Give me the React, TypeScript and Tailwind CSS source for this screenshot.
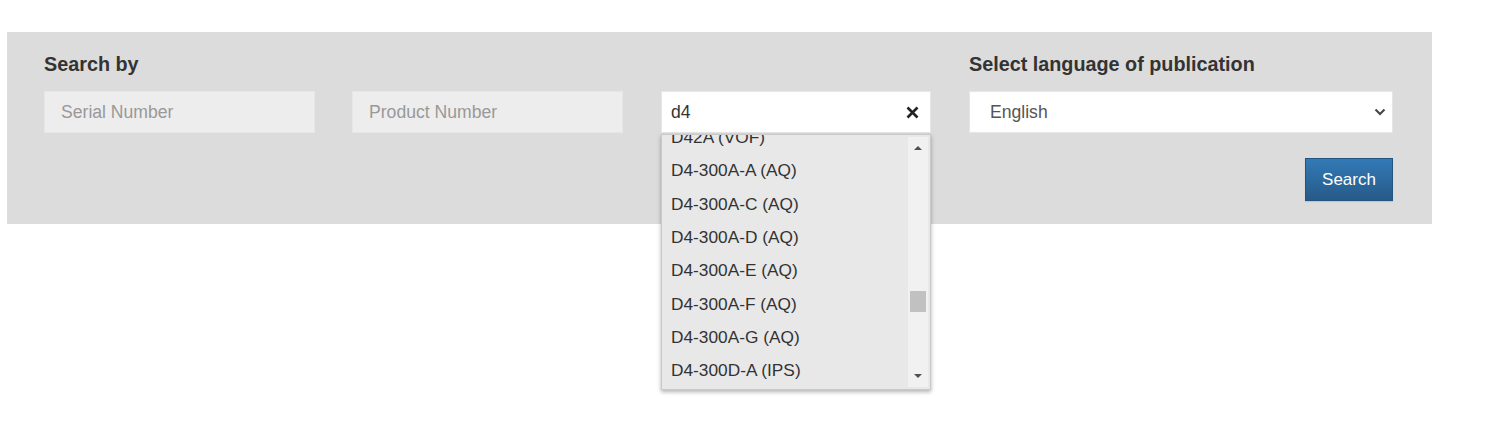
import React from "react";

// visible part of the suggestion list; the first row is scrolled half out of view
const options = [
    "D42A (VOF)",
    "D4-300A-A (AQ)",
    "D4-300A-C (AQ)",
    "D4-300A-D (AQ)",
    "D4-300A-E (AQ)",
    "D4-300A-F (AQ)",
    "D4-300A-G (AQ)",
    "D4-300D-A (IPS)",
];

const font = { fontFamily: '"Liberation Sans", Arial, sans-serif' };

const Suggestions: React.FC = () => {
    return (
        <div className="absolute left-0 top-[43px] z-10 h-[256px] w-[270px] overflow-hidden border border-[#c9c9c9] bg-[#e8e8e8] shadow-[0_2px_4px_rgba(0,0,0,0.3)]">
            <div className="-mt-[14px] pr-[24px]">
                {options.map((o) => (
                    <div key={o} className="h-[33.33px] pl-[9px] text-[17.3px] leading-[33.33px] text-[#333]">
                        {o}
                    </div>
                ))}
            </div>
            <div className="absolute right-[2px] top-[2px] bottom-[2px] w-[20px] bg-[#f1f1f1]">
                <div className="absolute left-1/2 top-[9px] h-0 w-0 -translate-x-1/2 border-x-[4px] border-b-[4px] border-x-transparent border-b-[#505050]" />
                <div className="absolute left-[2px] right-[2px] top-[154px] h-[21px] bg-[#c1c1c1]" />
                <div className="absolute left-1/2 bottom-[9px] h-0 w-0 -translate-x-1/2 border-x-[4px] border-t-[4px] border-x-transparent border-t-[#505050]" />
            </div>
        </div>
    );
};

export default function App() {
    return (
        <div className="min-h-screen bg-white pt-[32px] pl-[7px]" style={font}>
            <div className="h-[192px] w-[1425px] bg-[#dcdcdc] pl-[37px] pt-[21px]">
                <div className="flex">
                    <div className="w-[271px]">
                        <h3 className="mb-[16px] h-[22px] text-[19.8px] font-bold leading-[22px] text-[#333]">Search by</h3>
                        <input
                            className="h-[42px] w-full border border-[#e6e6e6] bg-[#ededed] px-[16px] text-[17.6px] text-[#333] outline-none placeholder:text-[#999]"
                            placeholder="Serial Number"
                        />
                    </div>
                    <div className="ml-[37px] w-[271px] pt-[38px]">
                        <input
                            className="h-[42px] w-full border border-[#e6e6e6] bg-[#ededed] px-[16px] text-[17.6px] text-[#333] outline-none placeholder:text-[#999]"
                            placeholder="Product Number"
                        />
                    </div>
                    <div className="ml-[38px] w-[270px] pt-[38px]">
                        <div className="relative">
                            <div className="flex h-[42px] w-full items-center justify-between border border-[#e6e6e6] bg-white pl-[9px] pr-[11px]">
                                <span className="text-[17.6px] text-[#333]">d4</span>
                                <svg width="13" height="13" viewBox="0 0 13 13" className="text-[#222]">
                                    <path d="M1.5 1.5 L11.5 11.5 M11.5 1.5 L1.5 11.5" stroke="currentColor" strokeWidth="2.6" />
                                </svg>
                            </div>
                            <Suggestions />
                        </div>
                    </div>
                    <div className="ml-[38px] w-[424px]">
                        <h3 className="mb-[16px] h-[22px] text-[19.8px] font-bold leading-[22px] text-[#333]">Select language of publication</h3>
                        <div className="flex h-[42px] w-full items-center justify-between border border-[#e6e6e6] bg-white pl-[20px] pr-[6px]">
                            <span className="text-[17.6px] text-[#555]">English</span>
                            <svg width="12" height="8" viewBox="0 0 12 8" className="text-[#444]">
                                <path d="M1.5 1.5 L6 6 L10.5 1.5" fill="none" stroke="currentColor" strokeWidth="2" />
                            </svg>
                        </div>
                        <div className="mt-[25px] flex justify-end">
                            <button className="h-[43px] w-[88px] border border-[#245580] bg-gradient-to-b from-[#337ab7] to-[#265a88] text-[17px] text-white shadow-[0_1px_1px_rgba(0,0,0,0.1)]">
                                Search
                            </button>
                        </div>
                    </div>
                </div>
            </div>
        </div>
    );
}
